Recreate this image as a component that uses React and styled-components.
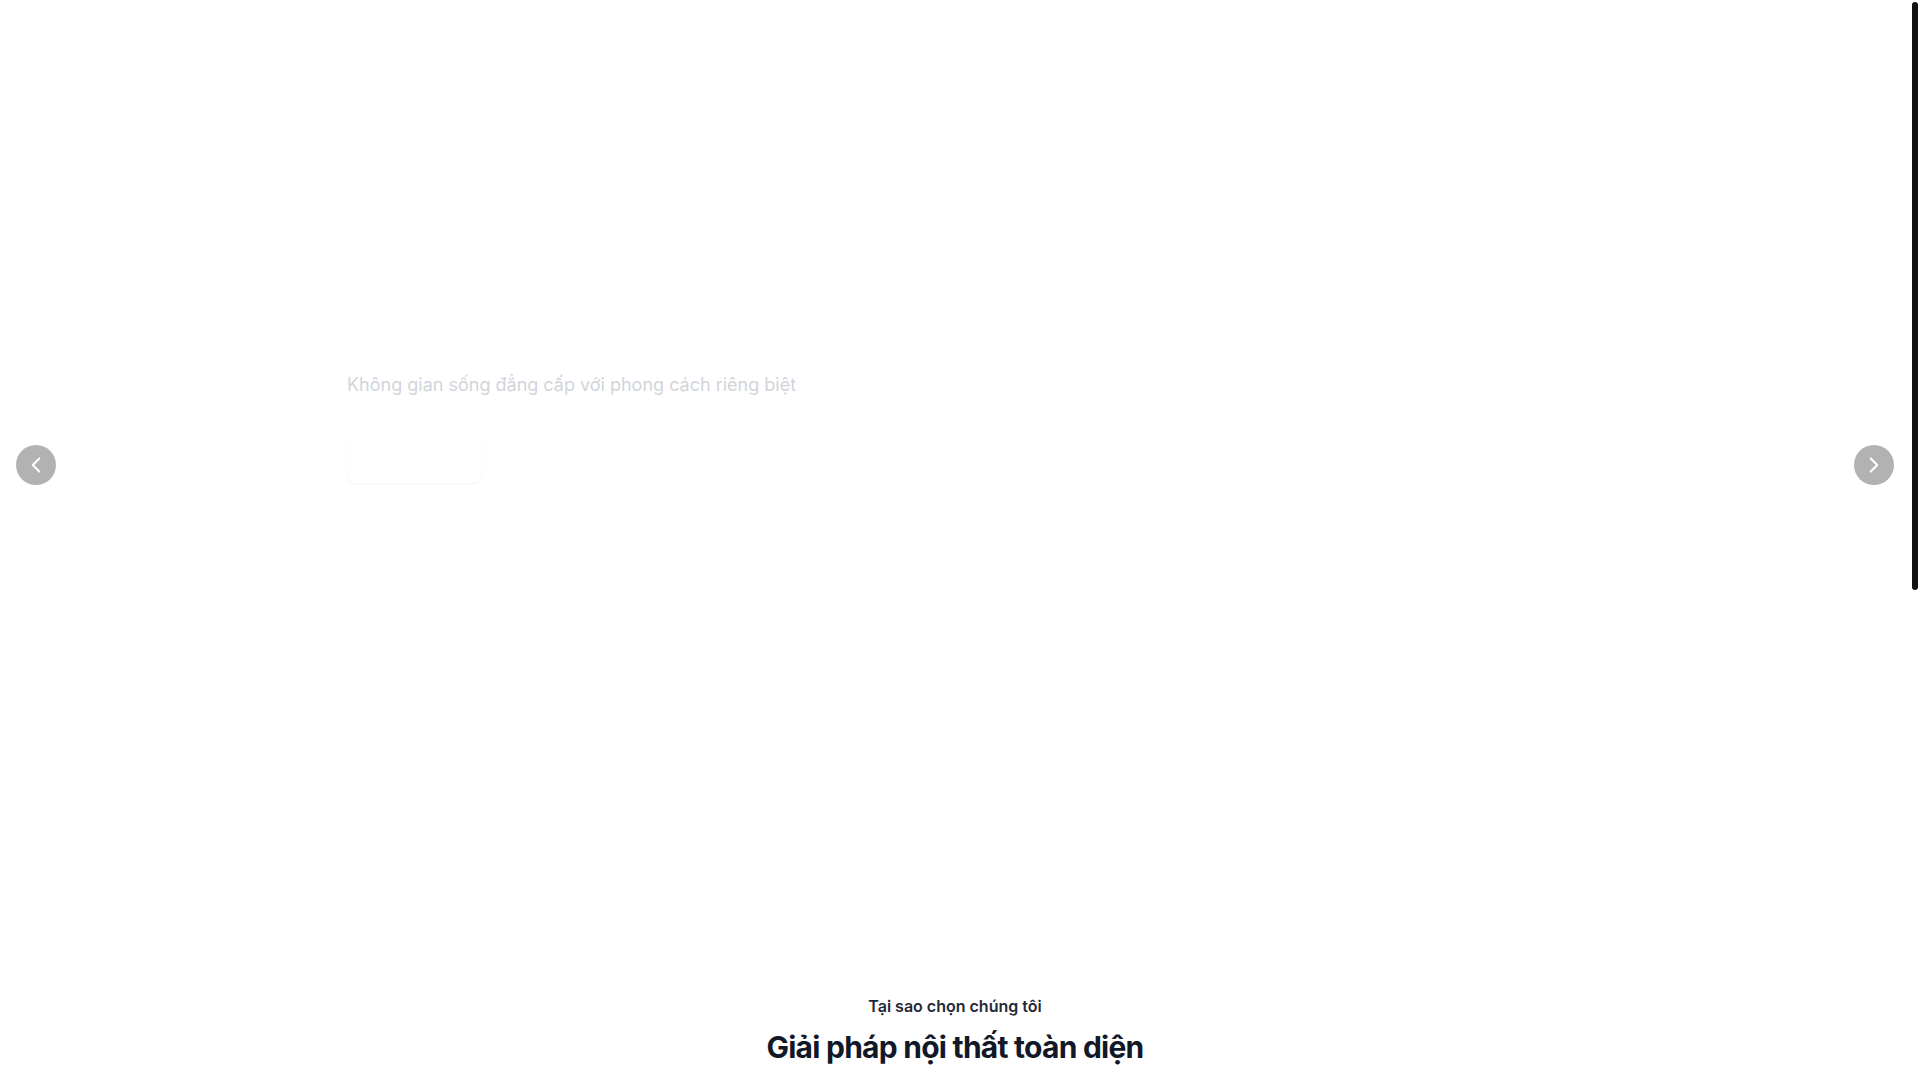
import React, { useLayoutEffect, useRef, useState } from "react";
import styled, { createGlobalStyle } from "styled-components";
import { ChevronLeft, ChevronRight, Sofa, Ruler, Truck, ShieldCheck } from "lucide-react";

const GlobalStyle = createGlobalStyle`
  html, body {
    margin: 0;
    padding: 0;
    height: 100%;
    overflow: hidden;
    background: #ffffff;
    font-family: Inter, "Noto Sans", sans-serif;
  }
  *, *::before, *::after {
    box-sizing: border-box;
  }
`;

const Page = styled.div`
  display: flex;
  height: 100vh;
  background: #ffffff;
`;

const Viewport = styled.main`
  flex: 1;
  min-width: 0;
  overflow-y: auto;
  scrollbar-width: none;

  &::-webkit-scrollbar {
    display: none;
  }
`;

const ScrollTrack = styled.div`
  width: 10px;
  flex-shrink: 0;
  padding: 2px;
  background: #ffffff;
`;

const ScrollThumb = styled.div`
  width: 6px;
  border-radius: 3px;
  background: #121212;
`;

const Hero = styled.section`
  position: relative;
  height: 930px;
  background: #ffffff;
  overflow: hidden;
`;

const Container = styled.div`
  max-width: 1280px;
  margin: 0 auto;
  padding: 0 32px;
`;

const HeroContent = styled(Container)`
  padding-top: 287px;
  display: flex;
  flex-direction: column;
  align-items: flex-start;
`;

const HeroTitle = styled.h1`
  margin: 0;
  font-size: 60px;
  line-height: 60px;
  font-weight: 700;
  color: #ffffff;
`;

const HeroSubtitle = styled.p`
  margin: 24px 0 0;
  font-size: 18px;
  line-height: 28px;
  color: #d1d5db;
`;

const HeroButton = styled.button`
  margin-top: 36px;
  height: 48px;
  width: 135px;
  border: none;
  border-radius: 8px;
  background: #ffffff;
  color: #ffffff;
  font-family: inherit;
  font-size: 16px;
  font-weight: 600;
  box-shadow: 0 1px 2px rgba(0, 0, 0, 0.05);
  cursor: pointer;
`;

const Arrow = styled.button`
  position: absolute;
  top: 50%;
  ${props => (props.side === "left" ? "left: 16px;" : "right: 16px;")}
  transform: translateY(-50%);
  width: 40px;
  height: 40px;
  border: none;
  border-radius: 50%;
  background: rgba(0, 0, 0, 0.3);
  color: #ffffff;
  display: flex;
  align-items: center;
  justify-content: center;
  padding: 0;
  cursor: pointer;
`;

const Features = styled.section`
  padding: 64px 0 96px;
  background: #ffffff;
`;

const SectionHead = styled.div`
  text-align: center;
`;

const Eyebrow = styled.p`
  margin: 0;
  font-size: 16px;
  line-height: 24px;
  font-weight: 600;
  color: #1f2937;
`;

const SectionTitle = styled.h2`
  margin: 11px 0 0;
  font-size: 30px;
  line-height: 36px;
  font-weight: 700;
  letter-spacing: -0.75px;
  color: #111827;
`;

const Grid = styled.div`
  margin-top: 64px;
  display: grid;
  grid-template-columns: repeat(4, 1fr);
  gap: 32px;
`;

const Card = styled.div`
  padding: 32px;
  border-radius: 12px;
  background: #ffffff;
  min-height: 750px;
`;

const CardIcon = styled.div`
  width: 56px;
  height: 56px;
  border-radius: 12px;
  display: flex;
  align-items: center;
  justify-content: center;
  color: #ffffff;
`;

const CardTitle = styled.h3`
  margin: 20px 0 8px;
  font-size: 20px;
  color: #ffffff;
`;

const CardText = styled.p`
  margin: 0;
  font-size: 15px;
  line-height: 24px;
  color: #ffffff;
`;

const features = [
  { icon: Sofa, title: "Thiết kế độc quyền", text: "Mỗi sản phẩm được thiết kế riêng theo không gian của bạn." },
  { icon: Ruler, title: "Thi công chuẩn xác", text: "Đội ngũ thợ lành nghề, đo đạc và lắp đặt tỉ mỉ." },
  { icon: Truck, title: "Giao hàng tận nơi", text: "Vận chuyển và lắp đặt miễn phí trong nội thành." },
  { icon: ShieldCheck, title: "Bảo hành dài hạn", text: "Cam kết bảo hành lên đến 5 năm cho mọi sản phẩm." },
];

export default function App() {
  const viewRef = useRef(null);
  const [thumb, setThumb] = useState({ height: 0, top: 0 });

  useLayoutEffect(() => {
    const el = viewRef.current;
    if (!el) return;
    const update = () => {
      const track = el.clientHeight - 4;
      const ratio = el.clientHeight / el.scrollHeight;
      const height = Math.max(24, track * ratio);
      const maxScroll = el.scrollHeight - el.clientHeight || 1;
      setThumb({ height, top: (el.scrollTop / maxScroll) * (track - height) });
    };
    update();
    el.addEventListener("scroll", update);
    window.addEventListener("resize", update);
    return () => {
      el.removeEventListener("scroll", update);
      window.removeEventListener("resize", update);
    };
  }, []);

  return (
    <Page>
      <GlobalStyle />
      <Viewport ref={viewRef}>
        <Hero>
          <HeroContent>
            <HeroTitle>Nội thất hiện đại</HeroTitle>
            <HeroSubtitle>Không gian sống đẳng cấp với phong cách riêng biệt</HeroSubtitle>
            <HeroButton>Khám phá</HeroButton>
          </HeroContent>
          <Arrow side="left" aria-label="Trước">
            <ChevronLeft size={26} strokeWidth={2} />
          </Arrow>
          <Arrow side="right" aria-label="Sau">
            <ChevronRight size={26} strokeWidth={2} />
          </Arrow>
        </Hero>
        <Features>
          <Container>
            <SectionHead>
              <Eyebrow>Tại sao chọn chúng tôi</Eyebrow>
              <SectionTitle>Giải pháp nội thất toàn diện</SectionTitle>
            </SectionHead>
            <Grid>
              {features.map(f => {
                const Icon = f.icon;
                return (
                  <Card key={f.title}>
                    <CardIcon>
                      <Icon size={28} />
                    </CardIcon>
                    <CardTitle>{f.title}</CardTitle>
                    <CardText>{f.text}</CardText>
                  </Card>
                );
              })}
            </Grid>
          </Container>
        </Features>
      </Viewport>
      <ScrollTrack>
        <ScrollThumb style={{ height: thumb.height, marginTop: thumb.top }} />
      </ScrollTrack>
    </Page>
  );
}
